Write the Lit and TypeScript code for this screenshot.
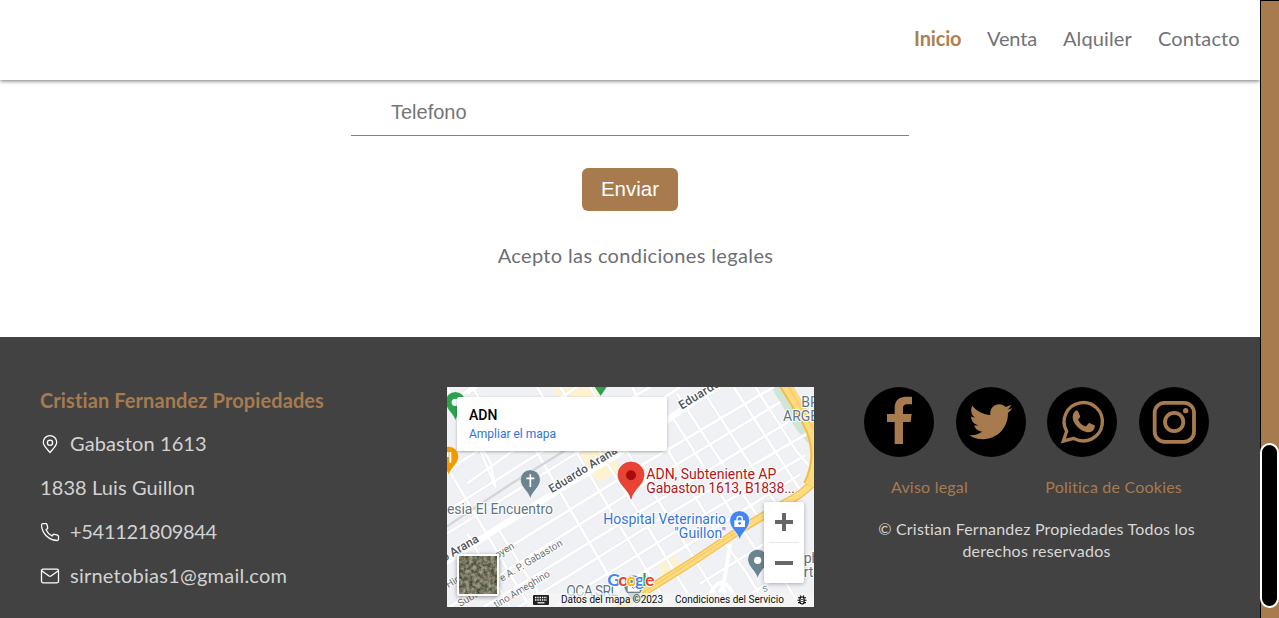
import { LitElement, html, svg, css } from "lit";
import { customElement } from "lit/decorators.js";

const BROWN = "#a87b4f";

@customElement("site-header")
class SiteHeader extends LitElement {
  static styles = css`
    :host { display: block; }
    header {
      height: 80px; box-sizing: border-box; padding: 0 20px 3px 0; background: #fff;
      display: flex; align-items: center; justify-content: flex-end; gap: 26px;
      box-shadow: 0 1px 4px rgba(0, 0, 0, 0.55);
      font: 400 20px/25px Lato, sans-serif; color: #717276;
    }
    .active { color: #b07f4f; font-weight: 700; width: 47px; letter-spacing: -0.15px; }
    .venta { width: 50px; letter-spacing: -0.15px; }
    .alquiler { width: 69px; letter-spacing: 0.12px; }
    .contacto { width: 82px; letter-spacing: 0.15px; }
    span { white-space: nowrap; }
  `;
  render() {
    return html`<header>
      <span class="active">Inicio</span><span class="venta">Venta</span>
      <span class="alquiler">Alquiler</span><span class="contacto">Contacto</span>
    </header>`;
  }
}

@customElement("contact-form")
class ContactForm extends LitElement {
  static styles = css`
    :host { display: flex; flex-direction: column; align-items: center; height: 257px; }
    input {
      margin-top: 8px; width: 558px; height: 48px; box-sizing: border-box;
      border: 0; border-bottom: 1px solid #a87b4f; border-radius: 0; padding: 2px 0 0 40px; background: none;
      font: 20px "Liberation Sans", Arial, sans-serif;
    }
    input::placeholder { color: #757575; }
    button {
      margin-top: 32px; width: 96px; height: 43px; border: 0; border-radius: 6px; padding: 0 0 1px;
      background: #a87b4f; color: #fff; font: 20.5px "Liberation Sans", Arial, sans-serif;
    }
    p {
      margin: 32px 0 0 11px; font: 400 20px/24px Lato, sans-serif; color: #6d6e75;
      letter-spacing: 0.36px; white-space: nowrap;
    }
  `;
  render() {
    return html`<input placeholder="Telefono" /><button>Enviar</button>
      <p>Acepto las condiciones legales</p>`;
  }
}

// Streets running up to the right, parallel to Eduardo Arana
const avenues = [
  "M0 60L75 0", "M60 20L90 0", "M0 262L40 225L390 0", "M60 290L200 190", "M0 372L130 290L420 110L610 0",
  "M0 440L330 235L560 90L700 0", "M0 600L260 435L600 225L980 0",
  "M0 665L180 550L560 310L1000 45", "M110 660L610 355L1040 95", "M215 660L640 395L1080 140",
  "M320 660L700 425L1075 205", "M420 660L760 450L1060 262", "M760 590L1000 440", "M850 660L1101 500",
];
const crossings = [
  "M0 0L60 110L130 225L145 300", "M75 0L150 120", "M0 240L110 425L200 580L250 660", "M100 190L145 300",
  "M185 60L290 230L400 420L540 660", "M270 0L400 215L520 420L660 650",
  "M340 0L470 215L590 400L740 650", "M430 0L525 170L640 350L800 610L830 660",
  "M555 0L640 150L745 330L800 420L900 560L960 660", "M670 80L790 270L860 385L960 540",
  "M690 20L800 190L940 400", "M780 30L880 185L1000 370", "M860 0L970 170L1060 310",
  "M925 0L1050 195L1090 240", "M150 420L300 660", "M60 440L190 660", "M1000 560L1060 660",
];

const placePin = (x: number, y: number, color: string) => svg`
  <path transform="translate(${x} ${y})" fill=${color} stroke="#fff" stroke-width="2"
    d="M0 88C-4 65-30 52-30 29A30 30 0 1 1 30 29C30 52 4 65 0 88Z"/>`;

@customElement("location-map")
class LocationMap extends LitElement {
  static styles = css`
    :host { display: block; width: 367px; height: 220px; position: relative; overflow: hidden; font-weight: 400; }
    .canvas { display: block; width: 367px; height: 220px; font-family: Roboto, sans-serif; }
    .card {
      position: absolute; left: 10px; top: 10px; width: 210px; height: 54px; box-sizing: border-box;
      padding: 9px 12px; background: #fff; border-radius: 2px; box-shadow: 0 1px 3px rgba(0,0,0,.3);
      font: 12px/18px Roboto, sans-serif; color: #2f73e0;
    }
    .card b { display: block; font: 500 14px/19px Roboto, sans-serif; color: #000; }
    .zoom {
      position: absolute; left: 317px; top: 115px; width: 40px; height: 81px; border-radius: 2px;
      background: #fff; box-shadow: 0 1px 4px rgba(0,0,0,.3);
    }
    .zoom svg { display: block; }
    .sat {
      position: absolute; left: 10px; top: 167px; width: 38px; height: 38px; border: 2px solid #fff;
      border-radius: 2px; box-shadow: 0 1px 4px rgba(0,0,0,.4);
    }
    .sat svg { display: block; width: 38px; height: 38px; }
    .legal {
      position: absolute; left: 80px; right: 0; bottom: 0; height: 14px; display: flex; align-items: center;
      background: rgba(245,245,245,.72); font: 10px/14px Roboto, sans-serif; color: #111; white-space: nowrap;
    }
    .keys { width: 16px; height: 10px; margin: 0 12px 0 6px; }
    .data { width: 114px; letter-spacing: -0.02px; }
    .terms { width: 122px; letter-spacing: 0; }
    .bug { width: 10px; height: 10px; }
  `;
  render() {
    return html`
      <svg class="canvas" viewBox="0 0 1101 660">
        <rect width="1101" height="660" fill="#f0f1f4"/>
        <g fill="#fdf3d0">
          <path d="M315 0h130l40 65-100 45z"/><path d="M400 200l65-35 60 85-75 35z"/><path d="M630 525l55-25 20 40-60 30z"/>
        </g>
        <path d="M972 0L1050 130L1085 170V90L1030 0Z" fill="#cfe6d6"/>
        <g fill="none" stroke="#e2e4e8" stroke-width="11">${avenues.map((d) => svg`<path d=${d}/>`)}${crossings.map((d) => svg`<path d=${d}/>`)}</g>
        <g fill="none" stroke="#fff" stroke-width="8.500">${avenues.map((d) => svg`<path d=${d}/>`)}${crossings.map((d) => svg`<path d=${d}/>`)}</g>
        <path d="M0 418L190 292L420 150" stroke="#d3d5d8" stroke-width="7" fill="none"/>
        <path d="M-10 530L150 425L300 332L515 200L700 72L815 -5" stroke="#fff" stroke-width="19" fill="none"/>
        <path d="M850 470L830 590L800 660M825 590L850 660M790 620Q825 550 860 625" stroke="#fff" stroke-width="11" fill="none"/>
        <g fill="none">
          <path d="M1120 262Q1075 320 1010 350L880 428L740 522L560 635L510 670" stroke="#f3bd4a" stroke-width="24"/>
          <path d="M1120 262Q1075 320 1010 350L880 428L740 522L560 635L510 670" stroke="#fddc80" stroke-width="17"/>
          <path d="M880 428L510 668" stroke="#f5c55a" stroke-width="3"/>
          <path d="M1012 -10L1082 105Q1105 145 1108 200Q1108 250 1085 295" stroke="#f3bd4a" stroke-width="36"/>
          <path d="M1015 -10L1085 105Q1108 145 1111 200Q1111 250 1088 295" stroke="#fddc80" stroke-width="29"/>
          <path d="M1020 -10L1101 128" stroke="#f8cf6c" stroke-width="8"/>
        </g>

        ${placePin(25, 15, "#2ba24c")}<circle cx="25" cy="46" r="11" fill="#fff"/>
        <path d="M443 0h36l-18 26z" fill="#2ba24c"/>
        ${placePin(5, 179, "#f29900")}<path d="M2 196v14M10 195v32" stroke="#fff" stroke-width="6"/>
        ${placePin(250, 249, "#6c8490")}<path d="M250 262v38M238 274h24" stroke="#fff" stroke-width="5"/>
        ${placePin(878, 372, "#4285f4")}
        <path d="M862 400h32v20h-32z" fill="#fff"/><path d="M870 401v-5a8 8 0 0 1 16 0v5" fill="none" stroke="#fff" stroke-width="4"/><circle cx="878" cy="409" r="4" fill="#4285f4"/>
        ${placePin(932, 488, "#6c8490")}<circle cx="932" cy="520" r="11" fill="#fff"/>
        ${placePin(560, 565, "#6c8490")}<path d="M542 590h36v24h-36z" fill="#fff"/><path d="M542 590l18 14 18-14" fill="none" stroke="#6c8490" stroke-width="3"/>

        <g paint-order="stroke" stroke="#fff" stroke-width="6" stroke-linejoin="round">
          <g fill="#4f5358" stroke-width="7" font-weight="500">
            <text transform="translate(314 319) rotate(-31.500)" font-size="35" textLength="234">Eduardo Arana</text>
            <text transform="translate(704 68) rotate(-31.500)" font-size="36" textLength="138">Eduardo</text>
            <text transform="translate(-8 524) rotate(-30)" font-size="36" textLength="122">o Arana</text>
          </g>
          <g fill="#6b6f74" font-size="30">
            <text transform="translate(150 515) rotate(-31)">oyen</text>
            <text transform="translate(165 584) rotate(-31)" textLength="214">e A. P. Gabaston</text>
            <text transform="translate(148 664) rotate(-31)" textLength="190">tino Ameghino</text>
            <text transform="translate(4 604) rotate(-31)">Hip</text>
            <text transform="translate(40 660) rotate(-31)">Subt</text>
          </g>
          <g fill="#5f7581" font-size="42">
            <text x="0" y="382" textLength="318">esia El Encuentro</text>
            <text x="358" y="628" textLength="155">OCA SRL</text>
            <text x="1063" y="60">BR</text><text x="1008" y="102">ARGE</text>
            <text x="1070" y="528">ph</text><text x="1070" y="570">rti</text>
            <text transform="translate(950 616) rotate(-20)" font-size="24">S</text>
          </g>
          <g fill="#3474e0" font-size="42" text-anchor="end">
            <text x="837" y="412" textLength="368">Hospital Veterinario</text><text x="837" y="454" textLength="155">"Guillon"</text>
          </g>
          <g fill="#b3151a" font-size="42">
            <text x="598" y="277" textLength="390">ADN, Subteniente AP</text><text x="598" y="319" textLength="446">Gabaston 1613, B1838...</text>
          </g>
        </g>
        <path d="M552 336C546 306 513 294 513 263A39 38 0 0 1 591 263C591 294 558 306 552 336Z" fill="#ea4335" stroke="#d53327" stroke-width="2"/>
        <circle cx="552" cy="265" r="15" fill="#a50e0e"/>
        <g font-family="Lato" font-size="53" font-weight="700" stroke="#fff" stroke-width="6" paint-order="stroke">
          <text x="481" y="596" textLength="141"><tspan fill="#4285f4">G</tspan><tspan fill="#ea4335">o</tspan><tspan fill="#fbbc04">o</tspan><tspan fill="#4285f4">g</tspan><tspan fill="#34a853">l</tspan><tspan fill="#ea4335">e</tspan></text>
        </g>
      </svg>
      <div class="card"><b>ADN</b>Ampliar el mapa</div>
      <div class="sat"><svg viewBox="0 0 38 38">
        <filter id="grass" x="0" y="0" width="1" height="1" color-interpolation-filters="sRGB">
          <feTurbulence type="fractalNoise" baseFrequency="0.28" numOctaves="3" seed="4"/>
          <feColorMatrix values=".7 0 0 0 .11  .6 .1 0 0 .11  .6 0 0 0 .08  0 0 0 0 1"/>
        </filter>
        <rect width="38" height="38" filter="url(#grass)"/>
      </svg></div>
      <div class="legal">
        <svg class="keys" viewBox="0 0 16 10"><rect width="16" height="10" rx="1" fill="#222"/>
          <path d="M2 2.500h12M2 5h12" stroke="#fff" stroke-width="1.300" stroke-dasharray="1.400 .9"/><path d="M4.500 7.800h7" stroke="#fff" stroke-width="1.200"/></svg>
        <span class="data">Datos del mapa ©2023</span><span class="terms">Condiciones del Servicio</span>
        <svg class="bug" viewBox="0 0 10 10"><path d="M1 2.800h8M.5 5.200h9M1 7.600h8M3 .5l1.200 1.500M7 .5L5.800 2" stroke="#000" stroke-width="1.100"/>
          <rect x="3" y="2" width="4" height="7" rx="2" fill="#fff" stroke="#000" stroke-width="1.200"/><path d="M4.200 4.500h1.600M4.200 6.500h1.600" stroke="#000" stroke-width=".8"/></svg>
      </div>
      <div class="zoom"><svg width="40" height="81" viewBox="0 0 40 81">
        <path d="M11 20h18M20 11v18M11 61h18" stroke="#666" stroke-width="4"/><path d="M5 40.500h30" stroke="#e6e6e6"/>
      </svg></div>`;
  }
}

@customElement("site-footer")
class SiteFooter extends LitElement {
  static styles = css`
    :host {
      display: flex; box-sizing: border-box; height: 281px; padding: 50px 0 0 40px; background: #424242;
      font: 400 20px/24px Lato, sans-serif; color: #d2d2d2;
    }
    .info { width: 407px; display: flex; flex-direction: column; gap: 20px; white-space: nowrap; letter-spacing: 0.1px; }
    .info h2 { margin: 0; padding-top: 1px; height: 23px; font: inherit; font-weight: 700; color: #a87b4f; letter-spacing: 0.1px; }
    .row { display: flex; align-items: center; gap: 10px; }
    .phone { letter-spacing: -0.3px; }
    .mail { letter-spacing: 0.24px; }
    .row svg { width: 20px; height: 20px; margin-top: 2px; fill: none; stroke: #fff; stroke-width: 1.3; stroke-linecap: round; stroke-linejoin: round; }
    .side { width: 345px; margin-left: 50px; }
    .social { display: flex; justify-content: space-between; }
    .social svg { display: block; width: 70px; height: 70px; border-radius: 50%; background: #000; }
    .links { display: flex; justify-content: space-between; padding: 0 27px; margin-top: 19px; font-size: 16px; line-height: 22px; color: #a87b4f; letter-spacing: 0.21px; }
    .copy { margin: 20px 0 0; text-align: center; font-size: 16px; line-height: 22px; color: #d8d8d8; letter-spacing: 0.21px; }
  `;
  render() {
    return html`
      <div class="info">
        <h2>Cristian Fernandez Propiedades</h2>
        <div class="row"><svg viewBox="0 0 20 20"><path d="M10 18.500C8 16 3.300 12 3.300 8.300a6.700 6.700 0 0 1 13.400 0C16.700 12 12 16 10 18.500Z"/><circle cx="10" cy="8.800" r="2.600"/></svg><span>Gabaston 1613</span></div>
        <div class="row"><span>1838 Luis Guillon</span></div>
        <div class="row"><svg viewBox="0 0 20 20"><path d="M5.900 1.700H3C2 1.700 1.400 2.300 1.500 3.300 2 11.500 8.500 18 16.700 18.500c1 .1 1.800-.6 1.800-1.600v-2.400c0-.7-.4-1.200-1-1.400l-3-.8c-.5-.1-1 0-1.400.4l-1 1.300C9.300 12.700 7.300 10.600 6 7.800l1.300-1c.4-.3.6-.8.400-1.300L7 2.600c-.1-.5-.6-.9-1.100-.9Z"/></svg><span class="phone">+541121809844</span></div>
        <div class="row"><svg viewBox="0 0 20 20"><rect x="1.500" y="3.200" width="17" height="13.600" rx="1.500"/><path d="M2 5l7 5q1 .7 2 0l7-5"/></svg><span class="mail">sirnetobias1@gmail.com</span></div>
      </div>
      <location-map></location-map>
      <div class="side">
        <div class="social">
          <svg viewBox="0 0 210 210"><path fill=${BROWN} d="M144 29v23h-14c-10 0-13 5-13 14v15h26l-3 24h-23v66H92v-66H69V81h23V62c0-22 14-33 34-33z"/></svg>
          <svg viewBox="0 0 210 210"><path fill=${BROWN} transform="translate(40 39.500) scale(.252)" d="M459.370 151.716c.325 4.548.325 9.097.325 13.645 0 138.720-105.583 298.558-298.558 298.558-59.452 0-114.680-17.219-161.137-47.106 8.447.974 16.568 1.299 25.340 1.299 49.055 0 94.213-16.568 130.274-44.832-46.132-.975-84.792-31.188-98.112-72.772 6.498.974 12.995 1.624 19.818 1.624 9.421 0 18.843-1.300 27.614-3.573-48.081-9.747-84.143-51.980-84.143-102.985v-1.299c13.969 7.797 30.214 12.670 47.431 13.319-28.264-18.843-46.781-51.005-46.781-87.391 0-19.492 5.197-37.360 14.294-52.954 51.655 63.675 129.300 105.258 216.365 109.807-1.624-7.797-2.599-15.918-2.599-24.040 0-57.828 46.782-104.934 104.934-104.934 30.213 0 57.502 12.670 76.670 33.137 23.715-4.548 46.456-13.320 66.599-25.340-7.798 24.366-24.366 44.833-46.132 57.827 21.117-2.273 41.584-8.122 60.426-16.243-14.292 20.791-32.161 39.308-52.628 54.253z"/></svg>
          <svg viewBox="0 0 210 210"><path fill="none" stroke=${BROWN} stroke-width="10" d="M49 162L59 133A57.500 57.500 0 1 1 80 154Z"/>
            <path fill=${BROWN} d="M83 74c3-4 8-4 10-1l6 14c1 3-1 5-5 10-1 1-1 2 0 3 5 9 11 14 20 18 1 1 3 0 4-1l6-7c1-2 3-2 5-1l13 6c2 1 2 3 1 6-2 10-10 15-18 15-8 0-23-6-34-17C82 110 77 100 77 90c0-8 3-13 6-16z"/></svg>
          <svg viewBox="0 0 210 210"><g fill="none" stroke=${BROWN} stroke-width="11.500"><rect x="47" y="47.500" width="118" height="117" rx="30"/><circle cx="105.500" cy="105" r="27.500"/></g><circle cx="140" cy="71" r="8" fill=${BROWN}/></svg>
        </div>
        <div class="links"><span>Aviso legal</span><span>Politica de Cookies</span></div>
        <p class="copy">© Cristian Fernandez Propiedades Todos los<br />derechos reservados</p>
      </div>`;
  }
}

@customElement("app-root")
class AppRoot extends LitElement {
  static styles = css`
    :host { display: flex; height: 618px; overflow: hidden; background: #fff; }
    main { width: 1260px; overflow: hidden; }
    site-header { position: relative; }
    .track { width: 19px; height: 618px; box-sizing: border-box; border: solid #000; border-width: 1px 0 0 1px; background: #a87b4f; padding-top: 442px; }
    .thumb { width: 19px; margin-left: -1px; height: 165px; box-sizing: border-box; border: 2px solid #fff; border-radius: 10px; background: #000; }
  `;
  render() {
    return html`<main><site-header></site-header><contact-form></contact-form><site-footer></site-footer></main>
      <div class="track"><div class="thumb"></div></div>`;
  }
}
